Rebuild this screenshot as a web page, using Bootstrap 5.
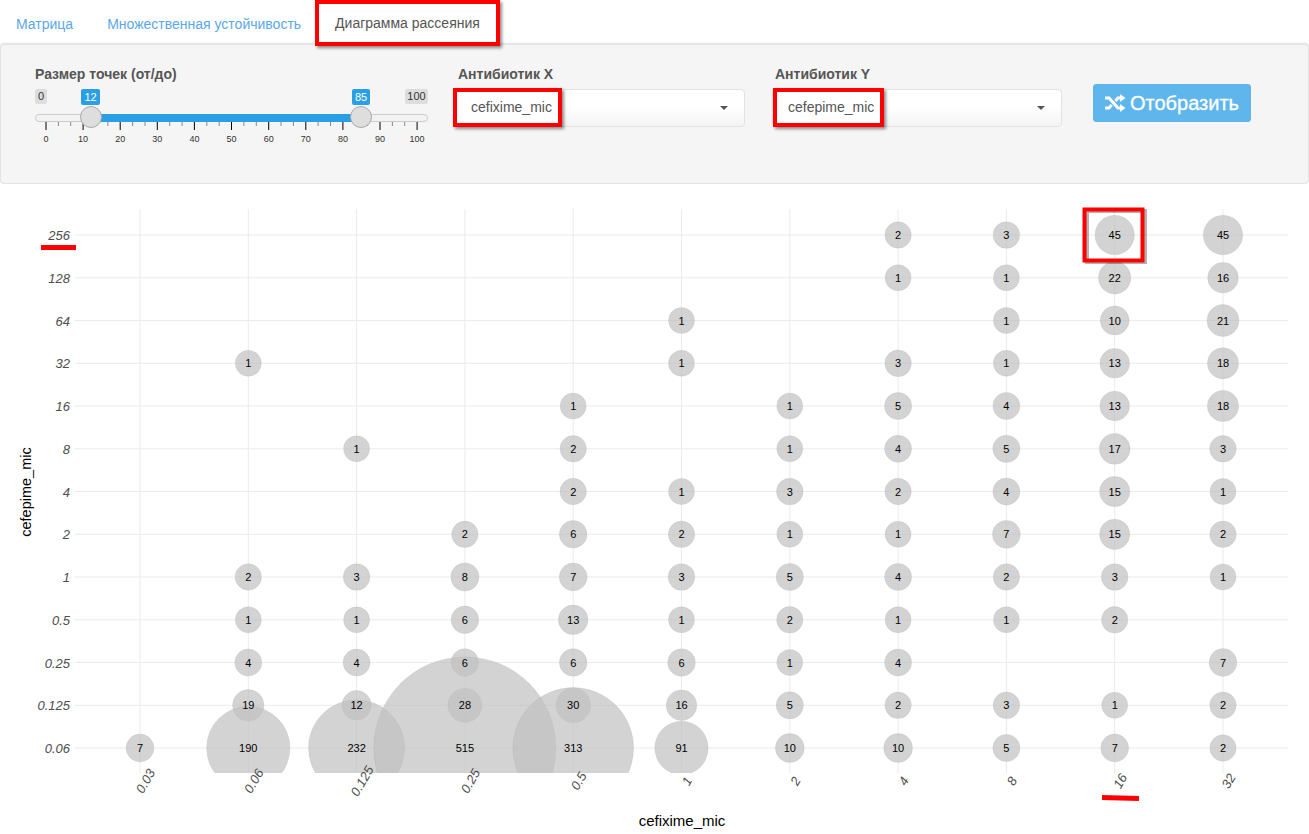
<!DOCTYPE html>
<html lang="ru">
<head>
<meta charset="utf-8">
<title>Диаграмма рассеяния</title>
<link href="https://cdn.jsdelivr.net/npm/bootstrap@5.3.0/dist/css/bootstrap.min.css" rel="stylesheet">
<style>
html,body{height:834px;overflow:hidden}
body{font-family:"Liberation Sans",Arial,sans-serif;font-size:14px;color:#555;background:#fff}
.tabbar{height:44px;padding-left:1px;flex-wrap:nowrap}
.tabbar .nav-link{padding:14px 15px 0;height:44px;font-size:14px;line-height:20px;color:#5aa7ea;margin-right:4px;border:0;border-radius:0}
.tabbar .tab-marked{color:#555;margin:0 0 0 -5px;padding:9px 15px 0 16px;width:185px;height:46px;border:4px solid #f00;background:#fff;box-shadow:2px 2px 3px rgba(0,0,0,.45);position:relative;z-index:2;white-space:nowrap}
.filter-well{height:140px;background:#f5f5f5;border:1px solid #e3e3e3;border-radius:4px;box-shadow:0 -1px 2px rgba(0,0,0,.12);padding:21px 0 0 34px}
.fld-label{font-weight:700;font-size:14px;line-height:16px;color:#555;margin-bottom:7px;white-space:nowrap}
.slider-col{width:393px;margin-right:27px}
.slider-box{display:block;margin-top:-1px}
.sel-col{width:290px;margin-right:27px}
.sel-col .fld-label{padding-left:3px}
.sel-box{height:38px;width:290px;border:1px solid #e3e3e3;border-radius:4px;background:linear-gradient(#fff 45%,#f4f4f4);padding-right:16px;position:relative}
.sel-mark{border:4px solid #f00;background:#fff;height:39px;margin:-2px 0 -1px -3px;padding:0 6px 0 14px;line-height:31px;font-size:14px;color:#555;box-shadow:2px 2px 3px rgba(0,0,0,.45);white-space:nowrap}
.sel-mark-y{margin-left:0;padding-left:11px}
.sel-caret{width:0;height:0;border-left:4px solid transparent;border-right:4px solid transparent;border-top:4px solid #555}
.show-btn{width:158px;height:38px;margin-top:18px;margin-left:4px;background:#5fb6ec;border:1px solid #5fb6ec;border-radius:3px;color:#fff;font-size:20px;line-height:24px;padding:0 0 0 10px;font-weight:400;-webkit-text-stroke:.3px #fff;white-space:nowrap}
.show-btn:hover{background:#5fb6ec;color:#fff;border-color:#5fb6ec}
.chart-box{display:block}
.g-line{stroke:#ebebeb;stroke-width:1}
.bub{fill:rgba(192,192,192,.7);stroke:rgba(170,170,170,.2);stroke-width:1}
.bub-t{font:11px "Liberation Sans",Arial,sans-serif;fill:#000;text-anchor:middle;dominant-baseline:central}
.ax-t{font:italic 13px "Liberation Sans",Arial,sans-serif;fill:#4d4d4d}
.ax-t-x{text-anchor:middle;dominant-baseline:central}
.ax-title{font:15px "Liberation Sans",Arial,sans-serif;fill:#000;text-anchor:middle}
.ax-title-y{font-size:14.500px}
.sl-t{font:9px "Liberation Sans",Arial,sans-serif;fill:#333;text-anchor:middle}
.sl-m{font:11px "Liberation Sans",Arial,sans-serif;text-anchor:middle}
</style>
</head>
<body>
<ul class="nav tabbar">
  <li class="nav-item"><a class="nav-link" href="#">Матрица</a></li>
  <li class="nav-item"><a class="nav-link" href="#">Множественная устойчивость</a></li>
  <li class="nav-item"><a class="nav-link tab-marked" href="#">Диаграмма рассеяния</a></li>
</ul>
<div class="filter-well d-flex align-items-start">
  <div class="slider-col">
    <div class="fld-label">Размер точек (от/до)</div>
    <svg id="slider" class="slider-box" width="393" height="62" viewBox="35 88 393 62"></svg>
  </div>
  <div class="sel-col">
    <div class="fld-label">Антибиотик X</div>
    <div class="sel-box d-flex justify-content-between align-items-center"><span class="sel-mark">cefixime_mic</span><span class="sel-caret"></span></div>
  </div>
  <div class="sel-col">
    <div class="fld-label">Антибиотик Y</div>
    <div class="sel-box d-flex justify-content-between align-items-center"><span class="sel-mark sel-mark-y">cefepime_mic</span><span class="sel-caret"></span></div>
  </div>
  <button class="btn show-btn d-flex align-items-center gap-1" type="button">
    <svg width="22" height="18" viewBox="0 0 22 18" aria-hidden="true"><path d="M1 4h4l9 10h3M1 14h4l2.6-3M11.300 7l2.700-3h3" fill="none" stroke="#fff" stroke-width="3"/><path d="M16 0l5.500 4-5.500 4zM16 10l5.500 4-5.500 4z" fill="#fff"/></svg>
    <span>Отобразить</span>
  </button>
</div>
<svg id="chart" class="chart-box" width="1309" height="650" viewBox="0 184 1309 650"></svg>
<script>
var xl=['0.03','0.06','0.125','0.25','0.5','1','2','4','8','16','32'];
var yl=['256','128','64','32','16','8','4','2','1','0.5','0.25','0.125','0.06'];
var X=function(i){return 140+i*108.3},Y=function(j){return 235+j*42.75};
var D=[
[[7,2],[8,3],[9,45],[10,45]],
[[7,1],[8,1],[9,22],[10,16]],
[[5,1],[8,1],[9,10],[10,21]],
[[1,1],[5,1],[7,3],[8,1],[9,13],[10,18]],
[[4,1],[6,1],[7,5],[8,4],[9,13],[10,18]],
[[2,1],[4,2],[6,1],[7,4],[8,5],[9,17],[10,3]],
[[4,2],[5,1],[6,3],[7,2],[8,4],[9,15],[10,1]],
[[3,2],[4,6],[5,2],[6,1],[7,1],[8,7],[9,15],[10,2]],
[[1,2],[2,3],[3,8],[4,7],[5,3],[6,5],[7,4],[8,2],[9,3],[10,1]],
[[1,1],[2,1],[3,6],[4,13],[5,1],[6,2],[7,1],[8,1],[9,2]],
[[1,4],[2,4],[3,6],[4,6],[5,6],[6,1],[7,4],[10,7]],
[[1,19],[2,12],[3,28],[4,30],[5,16],[6,5],[7,2],[8,3],[9,1],[10,2]],
[[0,7],[1,190],[2,232],[3,515],[4,313],[5,91],[6,10],[7,10],[8,5],[9,7],[10,2]]
];
var s='<defs><clipPath id="pl"><rect x="75" y="209" width="1213" height="564"/></clipPath></defs>';
yl.forEach(function(t,j){var y=Y(j).toFixed(1);s+='<line class="g-line" x1="75" x2="1288" y1="'+y+'" y2="'+y+'"/><text class="ax-t" x="70" y="'+(Y(j)+5)+'" text-anchor="end">'+t+'</text>'});
xl.forEach(function(t,i){var x=X(i).toFixed(1);s+='<line class="g-line" y1="209" y2="773" x1="'+x+'" x2="'+x+'"/>'});
s+='<g clip-path="url(#pl)">';
D.forEach(function(r,j){r.forEach(function(p){s+='<circle class="bub" cx="'+X(p[0]).toFixed(1)+'" cy="'+Y(j).toFixed(1)+'" r="'+(12.85+0.152*p[1]).toFixed(1)+'"/>'})});
s+='</g>';
D.forEach(function(r,j){r.forEach(function(p){s+='<text class="bub-t" x="'+X(p[0]).toFixed(1)+'" y="'+Y(j).toFixed(1)+'">'+p[1]+'</text>'})});
xl.forEach(function(t,i){s+='<text class="ax-t ax-t-x" transform="translate('+(X(i)+5.5)+' 781) rotate(-60)">'+t+'</text>'});
s+='<text class="ax-title ax-title-y" transform="translate(31 492) rotate(-90)">cefepime_mic</text><text class="ax-title" x="682" y="826">cefixime_mic</text>';
s+='<rect x="1085" y="209" width="58" height="51" fill="none" stroke="#000" stroke-opacity=".3" stroke-width="4" transform="translate(2 2)"/><rect x="1084.500" y="209.500" width="58" height="51" fill="none" stroke="#f00" stroke-width="4"/>';
s+='<line x1="41" x2="76" y1="247.500" y2="247.500" stroke="#f00" stroke-width="5"/><line x1="1102" x2="1139" y1="797.500" y2="798.500" stroke="#f00" stroke-width="5"/>';
document.getElementById('chart').innerHTML=s;

var q='';
q+='<rect x="35.500" y="114.500" width="392" height="7" rx="3.500" fill="#f2f2f2" stroke="#ccc"/>';
q+='<rect x="91" y="114" width="270" height="8" fill="#2a9fe6"/>';
for(var i=0;i<=30;i++){var tx=46+i*12.37;var big=i%3==0;q+='<line x1="'+tx.toFixed(1)+'" x2="'+tx.toFixed(1)+'" y1="122" y2="'+(big?130:126)+'" stroke="'+(big?'#000':'#888')+'"/>';if(big)q+='<text class="sl-t" x="'+tx.toFixed(1)+'" y="142">'+(i/3*10)+'</text>'}
[[91],[361]].forEach(function(a){q+='<circle cx="'+a[0]+'" cy="117" r="10.500" fill="#dedede" stroke="#aaa"/>'});
q+='<rect x="35" y="89" width="12" height="15" rx="2" fill="#ddd"/><text class="sl-m" x="41" y="100" fill="#333">0</text>';
q+='<rect x="405" y="89" width="23" height="15" rx="2" fill="#ddd"/><text class="sl-m" x="416.500" y="100" fill="#333">100</text>';
q+='<rect x="81" y="89" width="19" height="16" rx="2" fill="#2a9fe6"/><text class="sl-m" x="90.500" y="101" fill="#fff">12</text>';
q+='<rect x="352" y="89" width="18" height="16" rx="2" fill="#2a9fe6"/><text class="sl-m" x="361" y="101" fill="#fff">85</text>';
document.getElementById('slider').innerHTML=q;
</script>
<script src="https://cdn.jsdelivr.net/npm/bootstrap@5.3.0/dist/js/bootstrap.bundle.min.js"></script>
</body>
</html>
